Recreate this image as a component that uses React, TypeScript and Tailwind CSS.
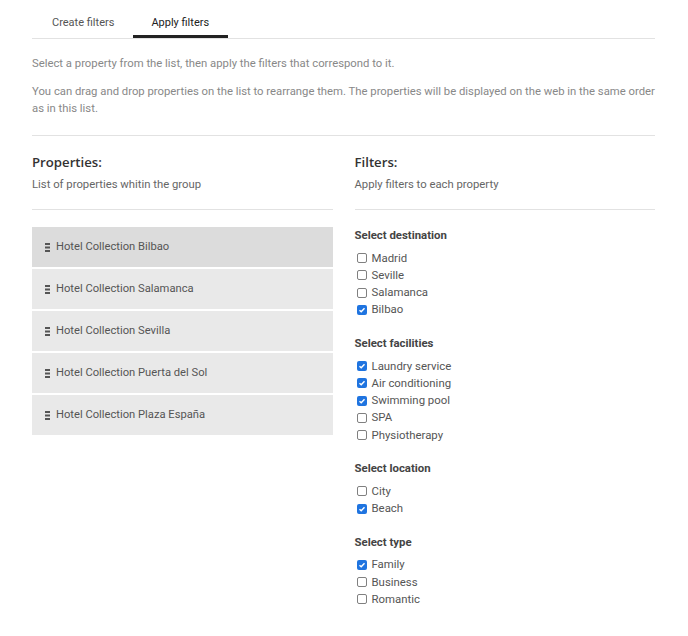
import React from "react";

const groups: { title: string; items: [string, boolean][] }[] = [
  { title: "Select destination", items: [["Madrid", false], ["Seville", false], ["Salamanca", false], ["Bilbao", true]] },
  { title: "Select facilities", items: [["Laundry service", true], ["Air conditioning", true], ["Swimming pool", true], ["SPA", false], ["Physiotherapy", false]] },
  { title: "Select location", items: [["City", false], ["Beach", true]] },
  { title: "Select type", items: [["Family", true], ["Business", false], ["Romantic", false]] },
];

const props = [
  "Hotel Collection Bilbao",
  "Hotel Collection Salamanca",
  "Hotel Collection Sevilla",
  "Hotel Collection Puerta del Sol",
  "Hotel Collection Plaza España",
];

function Grip() {
  return (
    <svg width="5" height="9" viewBox="0 0 5 9" className="shrink-0">
      <rect x="0" y="0" width="5" height="2" fill="#555" />
      <rect x="0" y="3.5" width="5" height="2" fill="#555" />
      <rect x="0" y="7" width="5" height="2" fill="#555" />
    </svg>
  );
}

function Check({ checked }: { checked: boolean }) {
  if (checked) {
    return (
      <span className="w-[10px] h-[10px] rounded-[2px] bg-[#1f74e0] flex items-center justify-center shrink-0">
        <svg width="8" height="8" viewBox="0 0 8 8">
          <path d="M1.5 4.2 L3.2 5.8 L6.5 2.2" stroke="white" strokeWidth="1.4" fill="none" />
        </svg>
      </span>
    );
  }
  return <span className="w-[10px] h-[10px] rounded-[2px] border border-[#808080] bg-white shrink-0" />;
}

export default function App() {
  return (
    <div className="w-[688px] h-[636px] bg-white font-['Roboto',sans-serif] text-[#555]">
      <div className="ml-[32px] w-[623px]">
        <div className="flex border-b border-[#e2e2e2] h-[39px]">
          <div className="pl-[20px] pr-[19px] pt-[15px] text-[11px] text-[#555] h-[38px]">Create filters</div>
          <div className="pl-[18px] pr-[19px] pt-[15px] text-[11px] text-[#222] border-b-[3px] border-[#222] h-[38px]">Apply filters</div>
        </div>
        <div className="text-[11.3px] text-[#888] leading-[17px] pb-[18px] border-b border-[#e2e2e2]">
          <p className="mt-[16px]">Select a property from the list, then apply the filters that correspond to it.</p>
          <p className="mt-[11px]">You can drag and drop properties on the list to rearrange them. The properties will be displayed on the web in the same order as in this list.</p>
        </div>
        <div className="grid grid-cols-2 gap-[22px]">
          <div>
            <div className="pb-[17px] border-b border-[#e2e2e2]">
              <h2 className="mt-[17px] text-[13.2px] font-semibold text-[#333] font-['Open_Sans',sans-serif] leading-[18px]">Properties:</h2>
              <p className="mt-[6px] text-[11.3px] text-[#666] leading-[15px]">List of properties whitin the group</p>
            </div>
            <div className="mt-[17px] flex flex-col gap-[2px]">
              {props.map((p, i) => (
                <div key={p} className={`h-[40px] flex items-center gap-[6px] pl-[13px] text-[11.2px] text-[#555] ${i === 0 ? "bg-[#dcdcdc]" : "bg-[#e9e9e9]"}`}>
                  <Grip />
                  <span>{p}</span>
                </div>
              ))}
            </div>
          </div>
          <div>
            <div className="pb-[17px] border-b border-[#e2e2e2]">
              <h2 className="mt-[17px] text-[13.2px] font-semibold text-[#333] font-['Open_Sans',sans-serif] leading-[18px]">Filters:</h2>
              <p className="mt-[6px] text-[11.3px] text-[#666] leading-[15px]">Apply filters to each property</p>
            </div>
            <div className="mt-[18px] flex flex-col gap-[17.3px]">
              {groups.map((g) => (
                <div key={g.title}>
                  <div className="text-[11.4px] font-bold text-[#444] leading-[15px]">{g.title}</div>
                  <div className="mt-[6.5px] flex flex-col">
                    {g.items.map(([label, c]) => (
                      <div key={label} className="flex items-center gap-[5px] h-[17.3px] pl-[2px] text-[11.4px] text-[#555]">
                        <Check checked={c} />
                        <span>{label}</span>
                      </div>
                    ))}
                  </div>
                </div>
              ))}
            </div>
          </div>
        </div>
      </div>
    </div>
  );
}
